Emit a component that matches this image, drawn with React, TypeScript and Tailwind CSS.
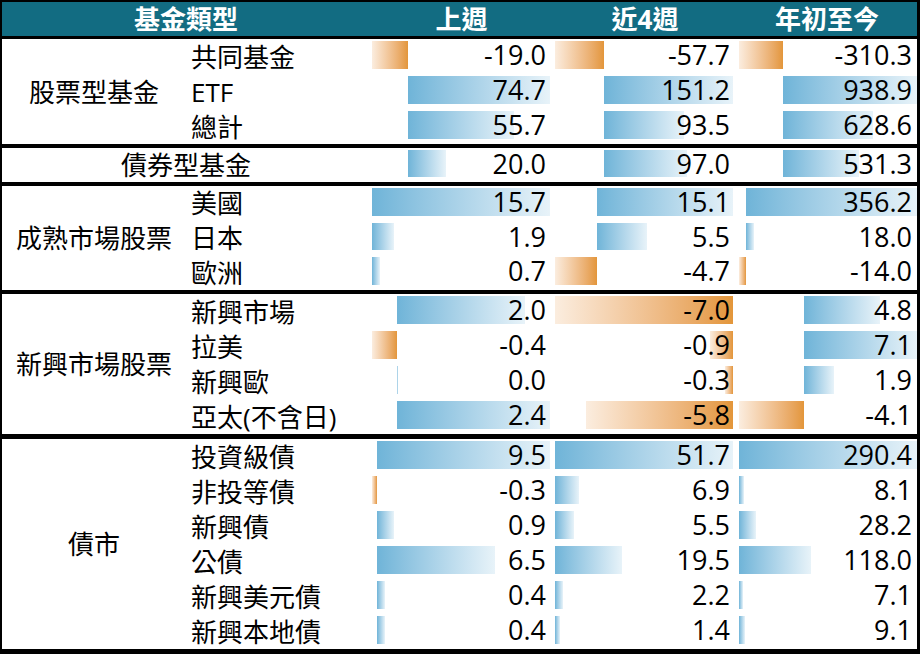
type Row = { label: string; vals: number[] };
type Section = { category: string; height: number; border: number; rows: Row[]; merged?: boolean; group: string };

const BAR_W = 178;

const sections: Section[] = [
  {
    category: "股票型基金",
    height: 105,
    border: 3,
    group: "a",
    rows: [
      { label: "共同基金", vals: [-19.0, -57.7, -310.3] },
      { label: "ETF", vals: [74.7, 151.2, 938.9] },
      { label: "總計", vals: [55.7, 93.5, 628.6] },
    ],
  },
  {
    category: "債券型基金",
    height: 34,
    border: 4,
    group: "a",
    merged: true,
    rows: [{ label: "債券型基金", vals: [20.0, 97.0, 531.3] }],
  },
  {
    category: "成熟市場股票",
    height: 104,
    border: 4,
    group: "b",
    rows: [
      { label: "美國", vals: [15.7, 15.1, 356.2] },
      { label: "日本", vals: [1.9, 5.5, 18.0] },
      { label: "歐洲", vals: [0.7, -4.7, -14.0] },
    ],
  },
  {
    category: "新興市場股票",
    height: 140,
    border: 4,
    group: "c",
    rows: [
      { label: "新興市場", vals: [2.0, -7.0, 4.8] },
      { label: "拉美", vals: [-0.4, -0.9, 7.1] },
      { label: "新興歐", vals: [0.0, -0.3, 1.9] },
      { label: "亞太(不含日)", vals: [2.4, -5.8, -4.1] },
    ],
  },
  {
    category: "債市",
    height: 210,
    border: 5,
    group: "d",
    rows: [
      { label: "投資級債", vals: [9.5, 51.7, 290.4] },
      { label: "非投等債", vals: [-0.3, 6.9, 8.1] },
      { label: "新興債", vals: [0.9, 5.5, 28.2] },
      { label: "公債", vals: [6.5, 19.5, 118.0] },
      { label: "新興美元債", vals: [0.4, 2.2, 7.1] },
      { label: "新興本地債", vals: [0.4, 1.4, 9.1] },
    ],
  },
];

const borderClass: Record<number, string> = {
  3: "border-t-[3px]",
  4: "border-t-[4px]",
  5: "border-t-[5px]",
};

// min / max per group and column, like Excel's automatic data bar range
function rangeFor(group: string, col: number) {
  const vals = sections
    .filter((s) => s.group === group)
    .flatMap((s) => s.rows.map((r) => r.vals[col]));
  return { min: Math.min(0, ...vals), max: Math.max(0, ...vals) };
}

const ValueCell = ({ v, group, col }: { v: number; group: string; col: number }) => {
  const { min, max } = rangeFor(group, col);
  const span = max - min;
  const left = ((Math.min(v, 0) - min) / span) * BAR_W;
  const width = Math.max(1, (Math.abs(v) / span) * BAR_W);
  const neg = v < 0;
  return (
    <div className={`relative flex h-full items-center justify-end pb-[4px] ${col === 2 ? "pr-[5px]" : "pr-[7px]"}`}>
      <div className="absolute top-[2px] bottom-[5px] left-[2px] w-[178px]">
        <div
          className={
            neg
              ? "absolute top-0 bottom-0 bg-linear-to-r from-[#fbeddf] to-[#e3963a]"
              : "absolute top-0 bottom-0 bg-linear-to-r from-[#6fb4d8] to-[#e8f3f9]"
          }
          style={{ left, width }}
        />
      </div>
      <span className="relative text-[27px] leading-none">{v.toFixed(1)}</span>
    </div>
  );
};

const Values = ({ vals, group }: { vals: number[]; group: string }) => (
  <>
    {vals.map((v, i) => (
      <ValueCell key={i} v={v} group={group} col={i} />
    ))}
  </>
);

export default function App() {
  return (
    <div className="bg-white w-[922px] h-[655px] font-['Open_Sans','Noto_Sans_CJK_TC',sans-serif] text-black">
      <div className="w-[920px] border-l-2 border-r-[3px] border-b-[5px] border-t-2 border-black">
        <div className="grid h-[34px] grid-cols-[368px_183px_184px_180px] bg-[#126c82] text-[26px] leading-none font-bold text-white">
          <div className="flex items-center justify-center">基金類型</div>
          <div className="flex items-center justify-center">上週</div>
          <div className="flex items-center justify-center">近4週</div>
          <div className="flex items-center justify-center">年初至今</div>
        </div>

        {sections.map((s) =>
          s.merged ? (
            <div
              key={s.category}
              className={`grid grid-cols-[368px_183px_184px_180px] border-black ${borderClass[s.border]}`}
              style={{ height: s.height + s.border }}
            >
              <div className="flex items-center justify-center text-[26px] leading-none">{s.category}</div>
              <Values vals={s.rows[0].vals} group={s.group} />
            </div>
          ) : (
            <div
              key={s.category}
              className={`flex border-black ${borderClass[s.border]}`}
              style={{ height: s.height + s.border }}
            >
              <div className="flex w-[184px] items-center justify-center text-[26px] leading-none">{s.category}</div>
              <div className="flex flex-1 flex-col">
                {s.rows.map((r) => (
                  <div key={r.label} className="grid flex-1 grid-cols-[184px_183px_184px_180px]">
                    <div className="flex items-center pl-[5px] text-[26px] leading-none">{r.label}</div>
                    <Values vals={r.vals} group={s.group} />
                  </div>
                ))}
              </div>
            </div>
          )
        )}
      </div>
    </div>
  );
}
